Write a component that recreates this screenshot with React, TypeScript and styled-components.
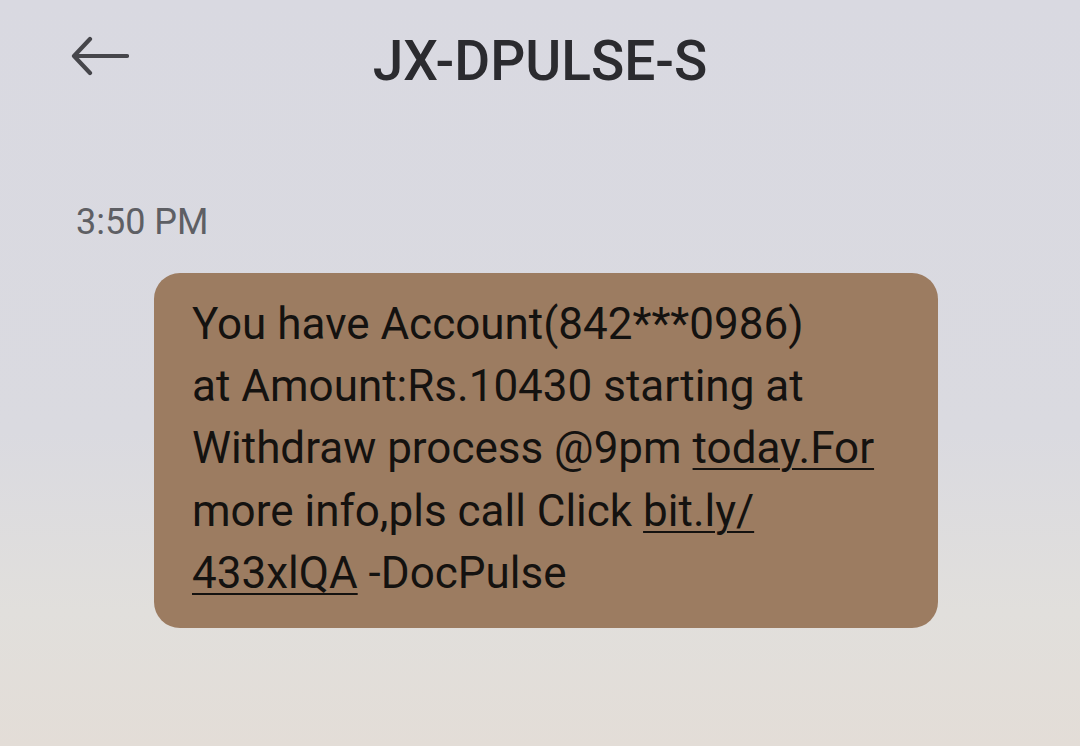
import styled, { createGlobalStyle } from 'styled-components';

const GlobalStyle = createGlobalStyle`
  html, body {
    margin: 0;
    padding: 0;
  }
  body {
    font-family: Roboto, "Noto Sans", sans-serif;
  }
`;

const Screen = styled.div`
  width: 1080px;
  height: 746px;
  overflow: hidden;
  background: linear-gradient(180deg, #d9d9e1 0%, #dadae0 58%, #e1dfdc 82%, #e3ddd7 100%);
  display: flex;
  flex-direction: column;
`;

const TopBar = styled.header`
  position: relative;
  height: 124px;
  display: flex;
  align-items: center;
  justify-content: center;
`;

const BackButton = styled.button`
  position: absolute;
  left: 68px;
  top: 30px;
  width: 64px;
  height: 52px;
  padding: 0;
  border: none;
  background: transparent;
  display: flex;
  align-items: center;
  justify-content: center;
`;

const Title = styled.h1`
  margin: 0 0 2px;
  font-size: 55px;
  font-weight: 500;
  color: #2b2b2f;
`;

const Thread = styled.main`
  padding: 76px 0 0 76px;
  display: flex;
  flex-direction: column;
  align-items: flex-start;
`;

const Timestamp = styled.div`
  font-size: 36px;
  color: #5e5f64;
  line-height: 44px;
`;

const Bubble = styled.div`
  margin: 29px 0 0 78px;
  width: 784px;
  box-sizing: border-box;
  padding: 20px 30px 24px 38px;
  background: #9c7c61;
  border-radius: 26px;
`;

const MessageText = styled.p`
  margin: 0;
  font-size: 44px;
  line-height: 62.2px;
  color: #141210;
  white-space: nowrap;
`;

const Link = styled.span`
  text-decoration: underline;
  text-decoration-thickness: 2px;
  text-underline-offset: 5px;
`;

const ArrowIcon = () => (
  <svg width="58" height="40" viewBox="0 0 58 40" fill="none">
    <path
      d="M56 20H4M19 3L3 20L19 37"
      stroke="#46464b"
      strokeWidth="4.2"
      strokeLinecap="round"
      strokeLinejoin="round"
    />
  </svg>
);

const App = () => (
  <>
    <GlobalStyle />
    <Screen>
      <TopBar>
        <BackButton aria-label="Back">
          <ArrowIcon />
        </BackButton>
        <Title>JX-DPULSE-S</Title>
      </TopBar>
      <Thread>
        <Timestamp>3:50 PM</Timestamp>
        <Bubble>
          <MessageText>
            You have Account(842***0986)
            <br />
            at Amount:Rs.10430 starting at
            <br />
            Withdraw process @9pm <Link>today.For</Link>
            <br />
            more info,pls call Click <Link>bit.ly/</Link>
            <br />
            <Link>433xlQA</Link> -DocPulse
          </MessageText>
        </Bubble>
      </Thread>
    </Screen>
  </>
);

export default App;
